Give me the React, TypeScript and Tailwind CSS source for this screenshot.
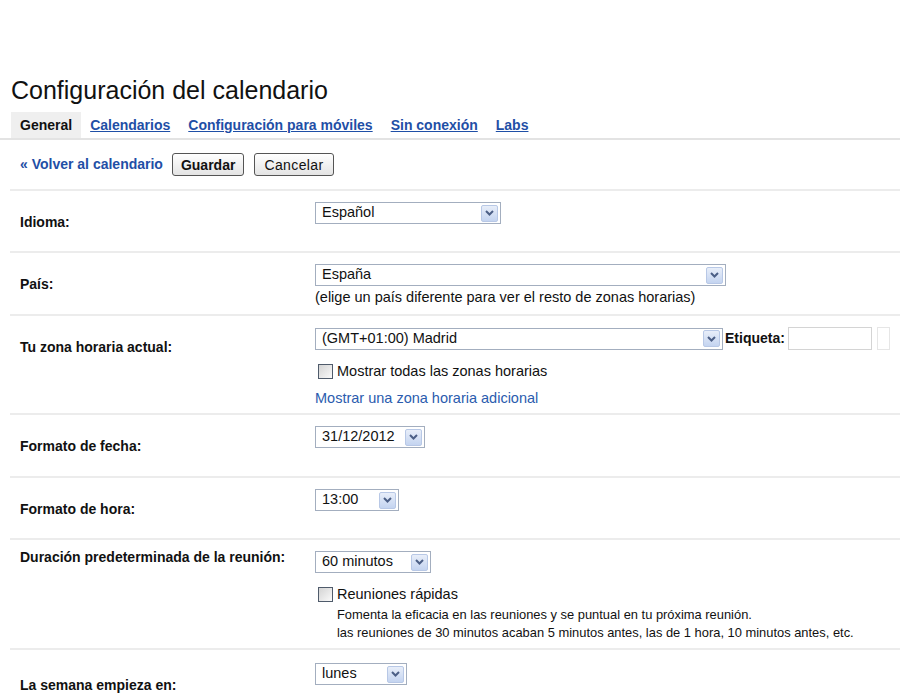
import React from 'react'

const font = { fontFamily: '"Liberation Sans", Arial, sans-serif' }

function Arrow() {
  return (
    <span className="flex h-[17px] w-[17px] items-center justify-center rounded-[2px] border border-[#b8c8e6] bg-gradient-to-b from-[#e8eef9] to-[#c4d4f0]">
      <svg width="9" height="6" viewBox="0 0 9 6">
        <path d="M1 1 L4.5 4.5 L8 1" fill="none" stroke="#4c5f86" strokeWidth="2" />
      </svg>
    </span>
  )
}

function Select({ value, width }: { value: string; width: string }) {
  return (
    <div className={`flex h-[22px] items-center justify-between border border-[#a3aebf] bg-white pl-[6px] pr-[2px] text-[14.5px] text-[#111] ${width}`}>
      <span>{value}</span>
      <Arrow />
    </div>
  )
}

function Checkbox() {
  return (
    <span className="inline-block h-[15px] w-[15px] shrink-0 border border-[#4f5b6b] bg-gradient-to-br from-[#d4d4d4] to-[#fafafa]" />
  )
}

function Row({
  label,
  labelTop = 'pt-[21px]',
  height,
  children,
}: {
  label: string
  labelTop?: string
  height: string
  children: React.ReactNode
}) {
  return (
    <div className={`flex border-t-2 border-[#ececec] ${height}`}>
      <div className={`w-[305px] shrink-0 pl-[10px] text-[14px] font-bold text-[#111] ${labelTop}`}>{label}</div>
      <div className="pt-[11px]">{children}</div>
    </div>
  )
}

export default function App() {
  return (
    <div className="min-h-screen w-[900px] overflow-hidden bg-white" style={font}>
      <div className="pt-[75px]">
        <h1 className="pl-[11px] text-[25px] leading-[30px] text-[#111]">Configuración del calendario</h1>

        {/* Tabs */}
        <div className="mt-[7px] flex border-b-2 border-[#e3e3e3] pl-[11px] text-[14px] font-bold leading-[16px]">
          <span className="bg-[#efefef] px-[9px] py-[5px] text-[#111]">General</span>
          {['Calendarios', 'Configuración para móviles', 'Sin conexión', 'Labs'].map((t) => (
            <a key={t} href="#" className="px-[9px] py-[5px] text-[#1f4fa6] underline">
              {t}
            </a>
          ))}
        </div>

        {/* Actions */}
        <div className="flex h-[49px] items-center pl-[20px] text-[14px]">
          <a href="#" className="font-bold text-[#1f4fa6]">« Volver al calendario</a>
          <button className="ml-[9px] h-[23px] rounded-[3px] border border-[#555] bg-gradient-to-b from-white to-[#e4e4e4] px-[8px] font-bold leading-[16px] text-[#111]">
            Guardar
          </button>
          <button className="ml-[10px] h-[23px] rounded-[3px] border border-[#555] bg-gradient-to-b from-white to-[#e4e4e4] px-[9px] leading-[16px] tracking-[0.4px] text-[#111]">
            Cancelar
          </button>
        </div>

        <div className="ml-[10px]">
          <Row label="Idioma:" height="h-[62px]">
            <Select value="Español" width="w-[186px]" />
          </Row>

          <Row label="País:" height="h-[63px]">
            <Select value="España" width="w-[411px]" />
            <div className="mt-[1px] text-[14.5px] text-[#111]">(elige un país diferente para ver el resto de zonas horarias)</div>
          </Row>

          <Row label="Tu zona horaria actual:" height="h-[99px]">
            <div className="flex items-center">
              <Select value="(GMT+01:00) Madrid" width="w-[408px]" />
              <span className="ml-[2px] text-[14px] font-bold text-[#111]">Etiqueta:</span>
              <span className="ml-[3px] h-[23px] w-[84px] border border-[#d4d4d4]" />
              <span className="ml-[5px] h-[23px] w-[13px] border border-[#e6e6e6]" />
            </div>
            <div className="mt-[11px] flex items-center gap-[4px] pl-[3px] text-[14.5px] text-[#111]">
              <Checkbox />
              <span>Mostrar todas las zonas horarias</span>
            </div>
            <a href="#" className="mt-[5px] block text-[14.5px] text-[#2b5cae]">Mostrar una zona horaria adicional</a>
          </Row>

          <Row label="Formato de fecha:" height="h-[63px]">
            <Select value="31/12/2012" width="w-[110px]" />
          </Row>

          <Row label="Formato de hora:" height="h-[62px]">
            <Select value="13:00" width="w-[84px]" />
          </Row>

          <Row label="Duración predeterminada de la reunión:" labelTop="pt-[7px]" height="h-[110px]">
            <Select value="60 minutos" width="w-[116px]" />
            <div className="mt-[11px] flex items-center gap-[4px] pl-[3px] text-[14.5px] text-[#111]">
              <Checkbox />
              <span>Reuniones rápidas</span>
            </div>
            <div className="pl-[22px] text-[12.9px] leading-[18px] text-[#111]">
              <div>Fomenta la eficacia en las reuniones y se puntual en tu próxima reunión.</div>
              <div>las reuniones de 30 minutos acaban 5 minutos antes, las de 1 hora, 10 minutos antes, etc.</div>
            </div>
          </Row>

          <Row label="La semana empieza en:" labelTop="pt-[25px]" height="h-[60px]">
            <div className="pt-[2px]">
              <Select value="lunes" width="w-[92px]" />
            </div>
          </Row>
        </div>
      </div>
    </div>
  )
}
